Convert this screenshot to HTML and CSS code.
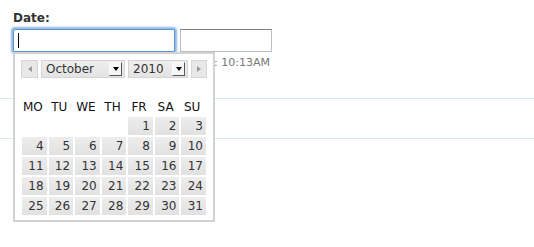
FILE: index.html
```html
<!DOCTYPE html>
<html>
<head>
<meta charset="utf-8">
<link rel="stylesheet" href="styles.css">
</head>
<body>
<div class="page">
  <div class="field">
    <label class="label">Date:</label>
    <div class="inputs">
      <span class="focus-wrap"><input class="date-input" type="text"></span>
      <input class="time-input" type="text">
    </div>
    <div class="help">Time: 10:13AM</div>
  </div>
  <div class="rows">
    <div class="row"></div>
    <div class="row"></div>
  </div>

  <div class="calendar">
    <div class="nav">
      <span class="navbtn prev"><span class="tri-left"></span></span>
      <span class="select month"><span class="sel-text">October</span><span class="arrow"><span class="tri-down"></span></span></span>
      <span class="select year"><span class="sel-text">2010</span><span class="arrow"><span class="tri-down"></span></span></span>
      <span class="navbtn next"><span class="tri-right"></span></span>
    </div>
    <div class="days">
      <span class="wd">MO</span><span class="wd">TU</span><span class="wd">WE</span><span class="wd">TH</span><span class="wd">FR</span><span class="wd">SA</span><span class="wd">SU</span>
      <span class="empty"></span><span class="empty"></span><span class="empty"></span><span class="empty"></span>
      <span class="day">1</span><span class="day">2</span><span class="day">3</span>
      <span class="day">4</span><span class="day">5</span><span class="day">6</span><span class="day">7</span><span class="day">8</span><span class="day">9</span><span class="day">10</span>
      <span class="day">11</span><span class="day">12</span><span class="day">13</span><span class="day">14</span><span class="day">15</span><span class="day">16</span><span class="day">17</span>
      <span class="day">18</span><span class="day">19</span><span class="day">20</span><span class="day">21</span><span class="day">22</span><span class="day">23</span><span class="day">24</span>
      <span class="day">25</span><span class="day">26</span><span class="day">27</span><span class="day">28</span><span class="day">29</span><span class="day">30</span><span class="day">31</span>
    </div>
  </div>
</div>
</body>
</html>
```

FILE: styles.css
```css
* { box-sizing: border-box; }
html, body { margin: 0; padding: 0; background: #fff; }
body {
  font-family: "DejaVu Sans", Verdana, sans-serif;
  color: #333;
  width: 534px;
  height: 247px;
  overflow: hidden;
}
.page { position: relative; width: 534px; height: 247px; }

.field { padding: 11px 0 0 13px; }
.label {
  display: block;
  font-size: 12px;
  font-weight: bold;
  line-height: 15px;
  color: #333;
}
.inputs {
  display: flex;
  gap: 5px;
  margin-top: 3px;
}
.focus-wrap { position: relative; display: block; }
.focus-wrap::after {
  content: "";
  position: absolute;
  left: 5px;
  top: 4px;
  width: 1px;
  height: 15px;
  background: #000;
}
.date-input {
  display: block;
  width: 162px;
  height: 23px;
  margin: 0;
  border: 1px solid #5d97d8;
  border-radius: 2px;
  box-shadow: 0 0 2px 2px #92b9e9;
  outline: none;
  background: #fff;
}
.time-input {
  display: block;
  width: 92px;
  height: 23px;
  margin: 0;
  border: 1px solid #bdbdbd;
  border-top-color: #7f7f7f;
  outline: none;
  background: #fff;
}
.help {
  width: 257px;
  margin-top: 4px;
  font-size: 11px;
  line-height: 14px;
  color: #777;
  text-align: right;
  white-space: nowrap;
}

.rows { margin-top: 28px; }
.row {
  height: 40px;
  border-top: 1px solid #d7e7f5;
}

.calendar {
  position: absolute;
  left: 13px;
  top: 52px;
  width: 202px;
  height: 170px;
  border: 2px solid #d2d2d2;
  background: #fff;
  padding: 6px 0 0 6px;
}
.nav { display: flex; height: 18px; }
.navbtn {
  width: 17px;
  height: 18px;
  background: #e8e8e8;
  border: 1px solid #d6d6d6;
  display: flex;
  align-items: center;
  justify-content: center;
}
.next { width: 16px; margin-left: 3px; }
.tri-left {
  width: 0; height: 0;
  border-top: 3px solid transparent;
  border-bottom: 3px solid transparent;
  border-right: 4px solid #9a9a9a;
}
.tri-right {
  width: 0; height: 0;
  border-top: 3px solid transparent;
  border-bottom: 3px solid transparent;
  border-left: 4px solid #9a9a9a;
}
.select {
  height: 18px;
  display: flex;
  align-items: center;
  background: linear-gradient(#eeeeee, #e3e3e3);
  border: 1px solid #d4d4d4;
  padding-left: 4px;
  font-size: 12px;
  line-height: 16px;
  color: #333;
}
.month { width: 84px; margin-left: 3px; }
.year { width: 60px; margin-left: 3px; }
.arrow {
  margin-left: auto;
  margin-right: 2px;
  width: 13px;
  height: 14px;
  background: #f6f6f6;
  border: 1px solid;
  border-color: #fafafa #555 #555 #fafafa;
  display: flex;
  align-items: center;
  justify-content: center;
}
.tri-down {
  width: 0; height: 0;
  border-left: 3px solid transparent;
  border-right: 3px solid transparent;
  border-top: 4px solid #000;
}

.days {
  display: grid;
  grid-template-columns: repeat(7, 1fr);
  column-gap: 2px;
  row-gap: 2px;
  width: 184px;
  margin: 22px 0 0 1px;
}
.wd {
  height: 15px;
  line-height: 15px;
  font-size: 12px;
  color: #111;
  text-align: center;
  padding-right: 3px;
}
.empty { height: 18px; }
.day {
  height: 18px;
  line-height: 18px;
  font-size: 12px;
  color: #333;
  text-align: right;
  padding-right: 3px;
  background: linear-gradient(#ededed, #e1e1e1);
}
```
